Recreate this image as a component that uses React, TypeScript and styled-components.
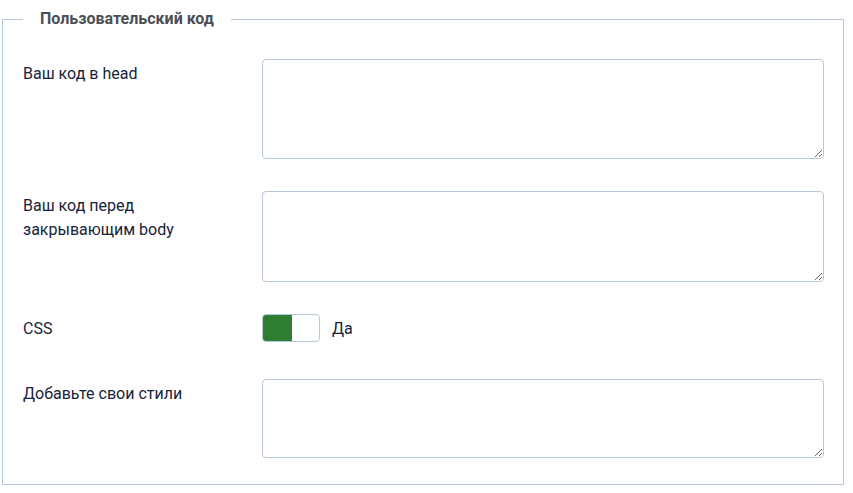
import React from "react";
import styled, { createGlobalStyle } from "styled-components";

const Global = createGlobalStyle`
  html, body { margin: 0; padding: 0; background: #fff; }
  body { font-family: Roboto, "Noto Sans", sans-serif; }
`;

const Page = styled.div`
  padding: 9px 9px 8px 2px;
`;

const Fieldset = styled.fieldset`
  margin: 0;
  padding: 30px 19px 26px 20px;
  border: 1px solid #b8c7da;
  min-width: 0;
`;

const Legend = styled.legend`
  padding: 0 17px;
  font-size: 16px;
  line-height: 20px;
  font-weight: 700;
  color: #4a4f55;
`;

const Row = styled.div<{ $gap?: number }>`
  display: grid;
  grid-template-columns: 239px 1fr;
  margin-top: ${(p) => p.$gap ?? 0}px;
`;

const Label = styled.label`
  font-size: 16px;
  line-height: 24px;
  color: #17233a;
  padding-top: 3px;
`;

const Area = styled.textarea<{ $h: number }>`
  box-sizing: border-box;
  display: block;
  width: 100%;
  height: ${(p) => p.$h}px;
  border: 1px solid #b8c7da;
  border-radius: 4px;
  font-family: inherit;
  font-size: 16px;
  padding: 6px 10px;
  margin: 0;
  outline: none;
`;

const SwitchWrap = styled.div`
  display: flex;
  align-items: center;
  gap: 12px;
`;

const Switch = styled.div`
  box-sizing: border-box;
  width: 58px;
  height: 28px;
  border: 1px solid #b8c7da;
  border-radius: 4px;
  overflow: hidden;
  display: flex;
`;

const Knob = styled.span<{ $on: boolean }>`
  width: 29px;
  background: ${(p) => (p.$on ? "#2e7d32" : "#fff")};
`;

const SwitchText = styled.span`
  font-size: 16px;
  color: #17233a;
`;

export default function App() {
  return (
    <>
      <Global />
      <Page>
        <Fieldset>
          <Legend>Пользовательский код</Legend>
          <Row>
            <Label>Ваш код в head</Label>
            <Area $h={100} />
          </Row>
          <Row $gap={32}>
            <Label>
              Ваш код перед
              <br />
              закрывающим body
            </Label>
            <Area $h={91} />
          </Row>
          <Row $gap={32}>
            <Label>CSS</Label>
            <SwitchWrap>
              <Switch>
                <Knob $on />
              </Switch>
              <SwitchText>Да</SwitchText>
            </SwitchWrap>
          </Row>
          <Row $gap={37}>
            <Label>Добавьте свои стили</Label>
            <Area $h={79} />
          </Row>
        </Fieldset>
      </Page>
    </>
  );
}
